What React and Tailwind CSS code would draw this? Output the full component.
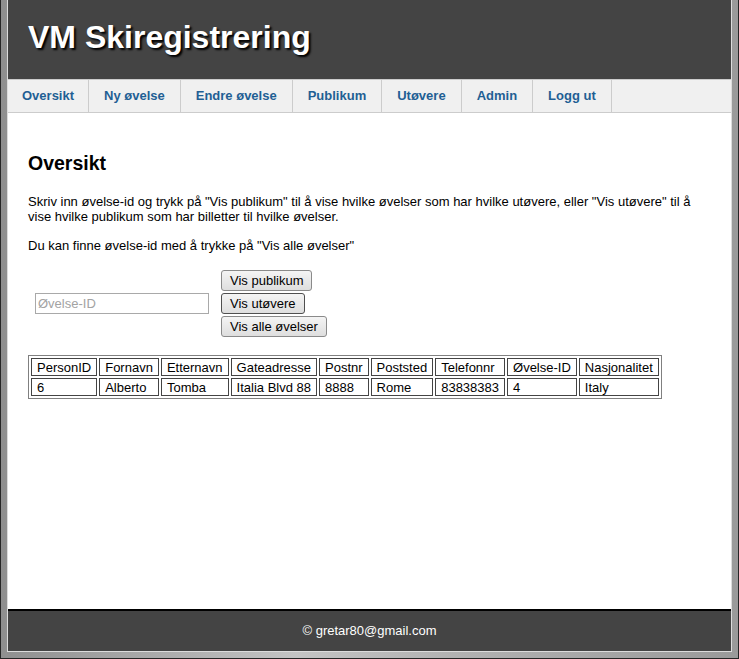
const navItems = ['Oversikt', 'Ny øvelse', 'Endre øvelse', 'Publikum', 'Utøvere', 'Admin', 'Logg ut']

const headers = ['PersonID', 'Fornavn', 'Etternavn', 'Gateadresse', 'Postnr', 'Poststed', 'Telefonnr', 'Øvelse-ID', 'Nasjonalitet']
const rows = [['6', 'Alberto', 'Tomba', 'Italia Blvd 88', '8888', 'Rome', '83838383', '4', 'Italy']]

function Btn({ children, dark }) {
  return (
    <button
      type="button"
      className={
        'h-[21px] px-[8px] text-[13px] leading-[15px] text-black rounded-[3px] border bg-[linear-gradient(#f4f4f4,#dedede)] ' +
        (dark ? 'border-[#4f4f4f]' : 'border-[#8a8a8a]')
      }
    >
      {children}
    </button>
  )
}

export default function App() {
  return (
    <div className="w-[739px] h-[659px] flex flex-col border-x border-b border-[#262626] bg-[linear-gradient(90deg,#8f8f8f,#c4c4c4_40%,#b3b3b3_60%,#9a9a9a)] px-[6px] pb-[6px] font-['Liberation_Sans',Arial,sans-serif] text-[13px]">
      <div className="flex-1 flex flex-col border-x border-b border-[#dcdcdc] bg-white overflow-hidden">
        {/* header */}
        <header className="h-[79px] bg-[#444444] px-[20px] pt-[19px]">
          <h1 className="text-[32px] leading-[37px] font-bold text-white [text-shadow:2px_2px_2px_#000]">
            VM Skiregistrering
          </h1>
        </header>

        {/* nav */}
        <nav className="h-[34px] flex bg-[#f0f0f0] border-y border-[#cccccc]">
          {navItems.map((n, i) => (
            <a
              key={n}
              className={
                'flex items-center border-r border-[#cccccc] font-bold text-[#1f5f94] cursor-pointer ' +
                (i === 0 ? 'px-[14px]' : 'px-[15px]')
              }
            >
              {n}
            </a>
          ))}
        </nav>

        {/* content */}
        <main className="flex-1 bg-white px-[20px] pt-[39px] text-black">
          <h2 className="text-[19.5px] leading-[22px] font-bold">Oversikt</h2>
          <p className="mt-[20px] leading-[15px]">
            Skriv inn øvelse-id og trykk på "Vis publikum" til å vise hvilke øvelser som har hvilke utøvere, eller "Vis utøvere" til å vise hvilke publikum som har billetter til hvilke øvelser.
          </p>
          <p className="mt-[14px] leading-[15px]">Du kan finne øvelse-id med å trykke på "Vis alle øvelser"</p>

          <div className="mt-[17px] flex items-center">
            <input
              placeholder="Øvelse-ID"
              className="ml-[7px] w-[174px] h-[21px] px-[2px] border border-[#a9a9a9] text-[13px] placeholder:text-[#a3a3a3] outline-none"
            />
            <div className="ml-[12px] flex flex-col items-start gap-[2px]">
              <Btn>Vis publikum</Btn>
              <Btn dark>Vis utøvere</Btn>
              <Btn>Vis alle øvelser</Btn>
            </div>
          </div>

          <table className="mt-[18px] border-separate border-spacing-[2px] border border-[#808080] leading-[15px]">
            <thead>
              <tr>
                {headers.map(h => (
                  <th key={h} className="h-[18px] border border-[#444] px-[5px] py-0 font-normal text-left">{h}</th>
                ))}
              </tr>
            </thead>
            <tbody>
              {rows.map((r, i) => (
                <tr key={i}>
                  {r.map((c, j) => (
                    <td key={j} className="h-[18px] border border-[#444] px-[5px] py-0">{c}</td>
                  ))}
                </tr>
              ))}
            </tbody>
          </table>
        </main>

        {/* footer */}
        <footer className="h-[42px] border-t-2 border-black bg-[#444444] flex items-center justify-center text-white">
          © gretar80@gmail.com
        </footer>
      </div>
    </div>
  )
}
